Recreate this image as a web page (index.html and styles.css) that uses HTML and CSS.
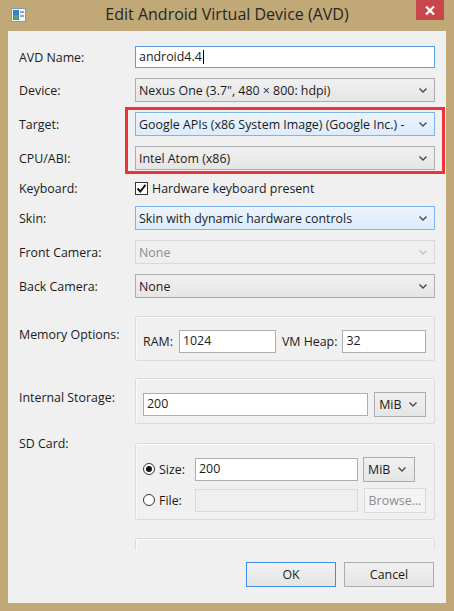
FILE: index.html
```html
<!DOCTYPE html>
<html>
<head>
<meta charset="utf-8">
<link rel="stylesheet" href="styles.css">
</head>
<body>
<div class="window">
  <div class="titlebar">
    <svg class="appicon" width="15" height="14" viewBox="0 0 15 14">
      <rect x="0.5" y="0.5" width="14" height="13" fill="#f4f6f8" stroke="#8a97a6"/>
      <rect x="2" y="2" width="6" height="10" fill="#3d7fb8"/>
      <rect x="3" y="7" width="4" height="4" fill="#5ba65a"/>
      <rect x="9" y="3" width="4" height="2" fill="#9aa6b2"/>
      <rect x="9" y="7" width="4" height="2" fill="#9aa6b2"/>
    </svg>
    <div class="title">Edit Android Virtual Device (AVD)</div>
    <div class="close">
      <svg width="10" height="9" viewBox="0 0 10 9"><path d="M1 0.5 L9 8.5 M9 0.5 L1 8.5" stroke="#fff" stroke-width="2.2"/></svg>
    </div>
  </div>
  <div class="client">
    <div class="form">
      <div class="row r-name">
        <div class="label">AVD Name:</div>
        <div class="input focus">android4.4<span class="caret"></span></div>
      </div>
      <div class="row r-combo">
        <div class="label">Device:</div>
        <div class="combo"><span class="val">Nexus One (3.7", 480 × 800: hdpi)</span><svg class="arrow" width="8" height="5" viewBox="0 0 8 5"><path d="M0.5 0.5 L4 4 L7.5 0.5" fill="none" stroke="#4a4a4a" stroke-width="1.4"/></svg></div>
      </div>
      <div class="row r-combo">
        <div class="label">Target:</div>
        <div class="combo hot"><span class="val">Google APIs (x86 System Image) (Google Inc.) -</span><svg class="arrow" width="8" height="5" viewBox="0 0 8 5"><path d="M0.5 0.5 L4 4 L7.5 0.5" fill="none" stroke="#4a4a4a" stroke-width="1.4"/></svg></div>
      </div>
      <div class="row r-combo">
        <div class="label">CPU/ABI:</div>
        <div class="combo"><span class="val">Intel Atom (x86)</span><svg class="arrow" width="8" height="5" viewBox="0 0 8 5"><path d="M0.5 0.5 L4 4 L7.5 0.5" fill="none" stroke="#4a4a4a" stroke-width="1.4"/></svg></div>
      </div>
      <div class="row r-check">
        <div class="label">Keyboard:</div>
        <div class="check">
          <span class="box"><svg width="11" height="11" viewBox="0 0 11 11"><path d="M1.5 5.5 L4.3 8.5 L9.5 1.8" fill="none" stroke="#111" stroke-width="2"/></svg></span>
          <span>Hardware keyboard present</span>
        </div>
      </div>
      <div class="row r-combo">
        <div class="label">Skin:</div>
        <div class="combo hot"><span class="val">Skin with dynamic hardware controls</span><svg class="arrow" width="8" height="5" viewBox="0 0 8 5"><path d="M0.5 0.5 L4 4 L7.5 0.5" fill="none" stroke="#4a4a4a" stroke-width="1.4"/></svg></div>
      </div>
      <div class="row r-combo">
        <div class="label">Front Camera:</div>
        <div class="combo disabled"><span class="val">None</span><svg class="arrow" width="8" height="5" viewBox="0 0 8 5"><path d="M0.5 0.5 L4 4 L7.5 0.5" fill="none" stroke="#c4c4c4" stroke-width="1.4"/></svg></div>
      </div>
      <div class="row r-combo">
        <div class="label">Back Camera:</div>
        <div class="combo"><span class="val">None</span><svg class="arrow" width="8" height="5" viewBox="0 0 8 5"><path d="M0.5 0.5 L4 4 L7.5 0.5" fill="none" stroke="#4a4a4a" stroke-width="1.4"/></svg></div>
      </div>

      <div class="row r-mem">
        <div class="label">Memory Options:</div>
        <div class="group g-mem">
          <span class="glabel">RAM:</span>
          <div class="input ram">1024</div>
          <span class="glabel heap">VM Heap:</span>
          <div class="input vmheap">32</div>
        </div>
      </div>

      <div class="row r-int">
        <div class="label">Internal Storage:</div>
        <div class="group g-int">
          <div class="input istore">200</div>
          <div class="unit"><span>MiB</span><svg class="arrow" width="8" height="5" viewBox="0 0 8 5"><path d="M0.5 0.5 L4 4 L7.5 0.5" fill="none" stroke="#4a4a4a" stroke-width="1.4"/></svg></div>
        </div>
      </div>

      <div class="row r-sd">
        <div class="label">SD Card:</div>
        <div class="group g-sd">
          <div class="sdrow">
            <span class="radio on"><span class="dot"></span></span>
            <span class="rlabel">Size:</span>
            <div class="input sdsize">200</div>
            <div class="unit sdunit"><span>MiB</span><svg class="arrow" width="8" height="5" viewBox="0 0 8 5"><path d="M0.5 0.5 L4 4 L7.5 0.5" fill="none" stroke="#4a4a4a" stroke-width="1.4"/></svg></div>
          </div>
          <div class="sdrow">
            <span class="radio"></span>
            <span class="rlabel">File:</span>
            <div class="input sdfile disabled"></div>
            <div class="btn browse">Browse...</div>
          </div>
        </div>
      </div>

      <div class="row r-snap">
        <div class="label"></div>
        <div class="group g-snap"></div>
      </div>
    </div>
    <div class="buttons">
      <div class="btn ok">OK</div>
      <div class="btn cancel">Cancel</div>
    </div>
  </div>
  <div class="highlight"></div>
</div>
</body>
</html>
```
FILE: styles.css
```css
* { box-sizing: border-box; }
html, body { margin: 0; padding: 0; }
body {
  width: 454px;
  height: 611px;
  overflow: hidden;
  background: #c1a877;
  font-family: "Open Sans", "Noto Sans", sans-serif;
  font-size: 12.4px;
  color: #1b1b1b;
}
.window {
  position: relative;
  width: 454px;
  height: 611px;
  background: #c1a877;
  padding: 0 8px 8px 8px;
  display: flex;
  flex-direction: column;
}
.titlebar {
  height: 31px;
  display: flex;
  align-items: flex-start;
  position: relative;
}
.appicon {
  margin-top: 8px;
  margin-left: 3px;
}
.title {
  position: absolute;
  left: -8px;
  right: -8px;
  top: 3px;
  text-align: center;
  font-size: 16px;
  color: #262626;
}
.close {
  position: absolute;
  right: 2px;
  top: 0;
  width: 28px;
  height: 20px;
  background: #c9474b;
  display: flex;
  align-items: center;
  justify-content: center;
}
.client {
  flex: 1;
  background: #f0f0f0;
  display: flex;
  flex-direction: column;
}
.form {
  height: 519px;
  overflow: hidden;
  padding: 15px 0 0 11px;
}
.row {
  display: grid;
  grid-template-columns: 116px 300px;
  align-items: center;
  margin-bottom: 10px;
}
.label { white-space: nowrap; }
.r-name { height: 22px; }
.r-combo { height: 24px; }
.r-check { height: 16px; }
.input {
  height: 22px;
  background: #fff;
  border: 1px solid #abadb3;
  padding: 0 3px;
  line-height: 20px;
  white-space: nowrap;
  overflow: hidden;
}
.input.focus { border-color: #5b9de1; }
.caret {
  display: inline-block;
  width: 1px;
  height: 14px;
  background: #000;
  vertical-align: -3px;
  margin-left: 1px;
}
.combo {
  height: 24px;
  border: 1px solid #acacac;
  background: linear-gradient(#f0f0f0, #e5e5e5);
  display: flex;
  align-items: center;
  padding: 0 7px 0 3px;
}
.combo .val {
  flex: 1;
  white-space: nowrap;
  overflow: hidden;
  margin-right: 8px;
}
.combo.hot {
  border-color: #7eb4ea;
  background: linear-gradient(#ecf4fc, #dcecfc);
}
.combo.disabled {
  border-color: #d9d9d9;
  background: #efefef;
  color: #8d8d8d;
}
.check { display: flex; align-items: center; gap: 4px; }
.box {
  width: 13px;
  height: 13px;
  border: 1px solid #333;
  background: #fff;
  display: flex;
  align-items: center;
  justify-content: center;
}
.group {
  border: 1px solid #dcdcdc;
  border-radius: 2px;
  box-shadow: inset 1px 1px 0 #fafafa;
}
.r-mem { margin-top: 18px; align-items: start; margin-bottom: 17px; }
.r-mem .label { padding-top: 10px; }
.g-mem {
  height: 45px;
  padding: 13px 8px 0 7px;
  display: flex;
  align-items: flex-start;
}
.glabel { line-height: 23px; margin-right: 6px; }
.glabel.heap { margin-left: 6px; margin-right: 5px; }
.g-mem .input { height: 23px; }
.ram { width: 97px; }
.vmheap { flex: 1; }
.r-int { align-items: start; margin-bottom: 19px; }
.r-int .label { padding-top: 11px; }
.g-int {
  height: 46px;
  padding: 13px 8px 0 7px;
  display: flex;
  align-items: flex-start;
  gap: 6px;
}
.g-int .input { width: 226px; height: 23px; margin-top: 1px; }
.unit {
  width: 52px;
  height: 25px;
  border: 1px solid #acacac;
  background: linear-gradient(#f0f0f0, #e5e5e5);
  display: flex;
  align-items: center;
  justify-content: space-between;
  padding: 0 8px 0 4px;
}
.r-sd { align-items: start; margin-bottom: 18px; }
.r-sd .label { margin-top: -8px; }
.g-sd {
  height: 77px;
  padding: 13px 8px 0 7px;
}
.sdrow { display: flex; align-items: center; height: 24px; margin-bottom: 7px; }
.radio {
  width: 12px;
  height: 12px;
  border: 1px solid #333;
  border-radius: 50%;
  background: #fff;
  display: flex;
  align-items: center;
  justify-content: center;
  flex: none;
}
.radio .dot { width: 6px; height: 6px; border-radius: 50%; background: #111; }
.rlabel { width: 40px; padding-left: 4px; }
.sdsize { width: 163px; height: 23px; }
.sdunit { margin-left: 5px; }
.sdfile { width: 163px; height: 23px; }
.input.disabled { background: #efefef; border-color: #d9d9d9; }
.btn {
  height: 25px;
  width: 90px;
  border: 1px solid #acacac;
  background: linear-gradient(#f0f0f0, #e5e5e5);
  display: flex;
  align-items: center;
  justify-content: center;
}
.browse {
  width: 62px;
  height: 25px;
  margin-left: 6px;
  border-color: #d9d9d9;
  background: #f4f4f4;
  color: #8d8d8d;
}
.r-snap { margin-bottom: 0; align-items: start; }
.g-snap { height: 40px; }
.buttons {
  display: flex;
  justify-content: flex-end;
  gap: 8px;
  padding: 12px 12px 0 0;
}
.ok { border-color: #3c8fe8; }
.highlight {
  position: absolute;
  left: 125px;
  top: 107px;
  width: 320px;
  height: 67px;
  border: 3px solid #ec3338;
  pointer-events: none;
}
```
